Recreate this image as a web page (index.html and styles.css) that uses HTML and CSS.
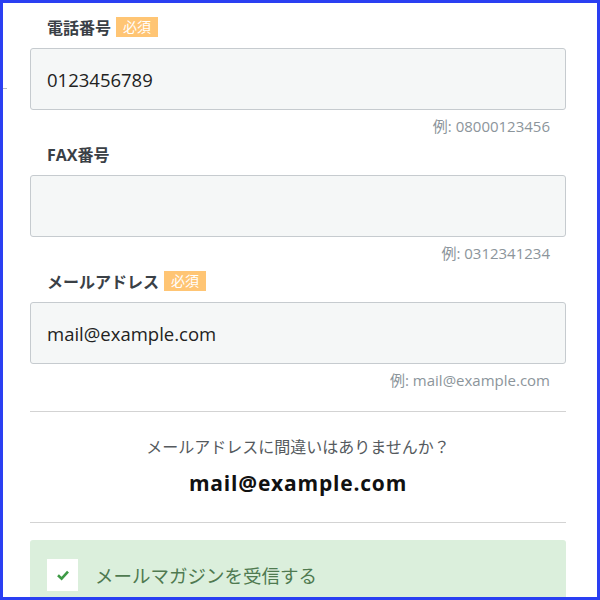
FILE: index.html
```html
<!DOCTYPE html>
<html lang="ja">
<head>
<meta charset="utf-8">
<link rel="stylesheet" href="styles.css">
</head>
<body>
<div class="frame">
  <span class="tick"></span>
  <div class="form">
    <div class="field">
      <div class="label">電話番号<span class="badge">必須</span></div>
      <div class="input">0123456789</div>
      <div class="hint">例: 08000123456</div>
    </div>
    <div class="field">
      <div class="label">FAX番号</div>
      <div class="input"></div>
      <div class="hint">例: 0312341234</div>
    </div>
    <div class="field">
      <div class="label">メールアドレス<span class="badge">必須</span></div>
      <div class="input">mail@example.com</div>
      <div class="hint">例: mail@example.com</div>
    </div>
    <div class="confirm">
      <p class="confirm-q">メールアドレスに間違いはありませんか？</p>
      <p class="confirm-mail">mail@example.com</p>
    </div>
    <div class="optin">
      <span class="check"><svg width="14" height="12" viewBox="0 0 14 12"><path d="M2 6.2 L5.6 9.6 L12 2.6" fill="none" stroke="#3d9a45" stroke-width="2.6"/></svg></span>
      <span class="optin-text">メールマガジンを受信する</span>
    </div>
  </div>
</div>
</body>
</html>
```
FILE: styles.css
```css
html, body { margin: 0; padding: 0; background: #fff; }
body { font-family: "Open Sans", "Noto Sans CJK JP", sans-serif; }
.frame {
  position: relative;
  width: 600px; height: 600px;
  box-sizing: border-box;
  border: 3px solid #2a3ff2;
  overflow: hidden;
}
.tick { position: absolute; left: 0; top: 85px; width: 4px; height: 1px; background: #b8bcc0; }
.form { margin-left: 27px; width: 536px; padding-top: 14px; }
.field { display: flex; flex-direction: column; }
.label {
  display: flex; align-items: center;
  height: 20px;
  margin-left: 17px;
  font-weight: 700; font-size: 16px; color: #3a4046;
}
.badge {
  margin-left: 5px;
  background: #ffc574; color: #fff;
  font-weight: 400; font-size: 14px;
  height: 20px; line-height: 20px; padding: 0 7px;
}
.input {
  margin-top: 11px;
  height: 62px; box-sizing: border-box;
  border: 1px solid #c6cbcf; border-radius: 3px;
  background: #f5f7f7;
  padding-left: 16px;
  display: flex; align-items: center;
  font-size: 18.5px; color: #222;
}
.hint {
  text-align: right; padding-right: 16px;
  font-size: 15px; color: #8c959b;
  height: 34px; line-height: 32px;
}
.confirm {
  margin-top: 13px;
  border-top: 1px solid #d3d3d3;
  border-bottom: 1px solid #d3d3d3;
  text-align: center;
  padding: 22px 0 25px;
}
.confirm p { margin: 0; }
.confirm-q { font-size: 16px; color: #555a5e; line-height: 26px; }
.confirm-mail { font-size: 21px; font-weight: 700; color: #111; margin-top: 9px !important; line-height: 28px; letter-spacing: 0.8px; }
.optin {
  margin-top: 17px;
  background: #dbefdc; border-radius: 3px;
  height: 70px;
  display: flex; align-items: center;
  padding-left: 17px;
}
.check {
  width: 31px; height: 32px; background: #fff;
  display: flex; align-items: center; justify-content: center;
}
.optin-text { margin-left: 17px; font-size: 18.5px; color: #4f7a50; }
```
